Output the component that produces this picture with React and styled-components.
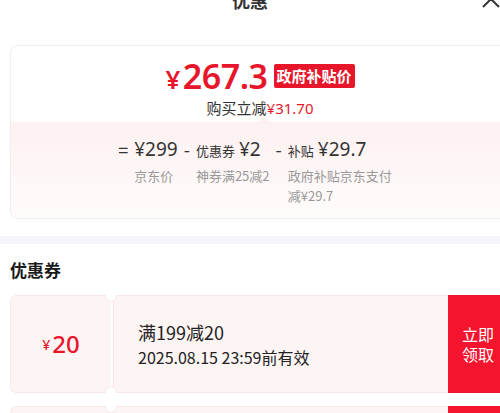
import React from "react";
import styled, { createGlobalStyle } from "styled-components";

const Global = createGlobalStyle`
  html, body { margin: 0; padding: 0; background: #fff; overflow: hidden; }
  body { font-family: "Noto Sans CJK SC", "Noto Sans", sans-serif; color: #1a1a1a; }
`;

const RED = "#e8162b";

const Page = styled.div`
  width: 500px;
  height: 413px;
  overflow: hidden;
`;

const Header = styled.div`
  position: relative;
  height: 44px;
  margin-top: -22px;
  display: flex;
  align-items: center;
  justify-content: center;
  font-size: 18px;
  font-weight: 700;
  color: #333;
`;

const Close = styled.svg`
  position: absolute;
  right: -2px;
  top: 10px;
`;

const Content = styled.div`
  padding-left: 10px;
  margin-right: -10px;
`;

const PriceCard = styled.div`
  margin-top: 23px;
  border: 1px solid #eeeeee;
  border-radius: 8px;
  box-shadow: 0 0 3px rgba(0, 0, 0, 0.03);
  overflow: hidden;
`;

const Top = styled.div`
  padding: 8px 0 4px;
  display: flex;
  flex-direction: column;
  align-items: center;
`;

const PriceLine = styled.div`
  display: flex;
  align-items: center;
  gap: 6px;
  color: ${RED};
  height: 44px;
`;

const Price = styled.div`
  font-family: "Noto Sans", sans-serif;
  font-weight: 600;
  font-size: 34px;
  line-height: 1;
  letter-spacing: -0.5px;
  display: flex;
  align-items: baseline;
`;

const Yen = styled.span`
  font-size: ${(p) => p.$size}px;
  margin-right: ${(p) => p.$gap || 0}px;
`;

const Badge = styled.span`
  background: ${RED};
  color: #fff;
  font-size: 15px;
  font-weight: 700;
  line-height: 24px;
  padding: 0 3px;
  border-radius: 2px;
`;

const Saving = styled.div`
  font-size: 15px;
  line-height: 20px;
  color: #333;
  em { font-style: normal; color: ${RED}; font-family: "Noto Sans", sans-serif; }
`;

const Breakdown = styled.div`
  position: relative;
  background: linear-gradient(#fdf1f1, #fffbfb);
  padding: 14px 8px 12px 0;
  display: flex;
  justify-content: center;
  align-items: flex-start;
  gap: 6px;
  &::before {
    content: "";
    position: absolute;
    top: -6px;
    left: 247px;
    border: 6px solid transparent;
    border-top: 0;
    border-bottom-color: #fdf1f1;
  }
`;

const Op = styled.div`
  font-size: 18px;
  line-height: 26px;
  color: #333;
`;

const Col = styled.div`
  display: flex;
  flex-direction: column;
  max-width: ${(p) => p.$max || 200}px;
`;

const ColTop = styled.div`
  display: flex;
  align-items: baseline;
  gap: 4px;
  height: 26px;
  color: #333;
`;

const Label = styled.span`
  font-size: 13px;
`;

const Amount = styled.span`
  font-family: "Noto Sans", sans-serif;
  font-size: 19px;
  line-height: 26px;
`;

const Sub = styled.div`
  margin-top: 4px;
  font-size: 13px;
  line-height: 20px;
  color: #999;
`;

const Band = styled.div`
  height: 8px;
  margin: 17px 0 0;
  background: #f6f6fa;
`;

const SectionTitle = styled.div`
  padding: 14px 0 0 10px;
  font-size: 17px;
  font-weight: 700;
  line-height: 24px;
  color: #1a1a1a;
`;

const CouponList = styled.div`
  padding: 13px 0 0 10px;
  margin-right: -10px;
  display: flex;
  flex-direction: column;
  gap: 13px;
`;

const Coupon = styled.div`
  display: flex;
  height: 98px;
  flex-shrink: 0;
  border-radius: 6px;
  overflow: hidden;
`;

const CLeft = styled.div`
  position: relative;
  width: 100px;
  background: #fdf4f4;
  border: 1px solid #f8e6e6;
  border-right: none;
  border-radius: 6px 0 0 6px;
  display: flex;
  align-items: center;
  justify-content: center;
  color: ${RED};
  font-family: "Noto Sans", sans-serif;
  font-weight: 500;
  &::before, &::after {
    content: "";
    position: absolute;
    right: -6px;
    width: 10px;
    height: 10px;
    border-radius: 50%;
    background: #fff;
    border: 1px solid #f8e6e6;
    z-index: 1;
  }
  &::before { top: -6px; }
  &::after { bottom: -6px; }
`;

const CAmount = styled.span`
  font-size: 24px;
  line-height: 1;
`;

const CMid = styled.div`
  flex: 1;
  background: #fdf4f4;
  border: 1px solid #f8e6e6;
  border-left: 1px solid #f6e4e4;
  border-right: none;
  margin-left: 2px;
  padding-left: 24px;
  display: flex;
  flex-direction: column;
  justify-content: center;
  color: #222;
`;

const CTitle = styled.div`
  font-size: 18px;
  line-height: 24px;
`;

const CDate = styled.div`
  font-size: 16px;
  line-height: 24px;
  margin-top: 1px;
`;

const CBtn = styled.div`
  width: 62px;
  background: #f5142d;
  color: #fff;
  display: flex;
  align-items: center;
  padding-left: 14px;
  box-sizing: border-box;
  font-size: 16px;
  line-height: 20px;
`;

function CouponItem({ amount, title, date }) {
  return (
    <Coupon>
      <CLeft>
        <Yen $size={14} $gap={2}>¥</Yen>
        <CAmount>{amount}</CAmount>
      </CLeft>
      <CMid>
        <CTitle>{title}</CTitle>
        <CDate>{date}</CDate>
      </CMid>
      <CBtn>
        立即
        <br />
        领取
      </CBtn>
    </Coupon>
  );
}

export default function App() {
  return (
    <Page>
      <Global />
      <Header>
        优惠
        <Close width="22" height="22" viewBox="0 0 22 22">
          <path d="M3 3 L19 19 M19 3 L3 19" stroke="#333" strokeWidth="2" fill="none" />
        </Close>
      </Header>
      <Content>
        <PriceCard>
          <Top>
            <PriceLine>
              <Price>
                <Yen $size={26} $gap={3}>¥</Yen>267.3
              </Price>
              <Badge>政府补贴价</Badge>
            </PriceLine>
            <Saving>
              购买立减<em>¥31.70</em>
            </Saving>
          </Top>
          <Breakdown>
            <Op>=</Op>
            <Col>
              <ColTop>
                <Amount>¥299</Amount>
              </ColTop>
              <Sub>京东价</Sub>
            </Col>
            <Op>-</Op>
            <Col>
              <ColTop>
                <Label>优惠券</Label>
                <Amount>¥2</Amount>
              </ColTop>
              <Sub>神券满25减2</Sub>
            </Col>
            <Op>-</Op>
            <Col $max={106}>
              <ColTop>
                <Label>补贴</Label>
                <Amount>¥29.7</Amount>
              </ColTop>
              <Sub>政府补贴京东支付减¥29.7</Sub>
            </Col>
          </Breakdown>
        </PriceCard>
      </Content>
      <Band />
      <SectionTitle>优惠券</SectionTitle>
      <CouponList>
        <CouponItem amount="20" title="满199减20" date="2025.08.15 23:59前有效" />
        <CouponItem amount="10" title="满99减10" date="2025.08.15 23:59前有效" />
      </CouponList>
    </Page>
  );
}
